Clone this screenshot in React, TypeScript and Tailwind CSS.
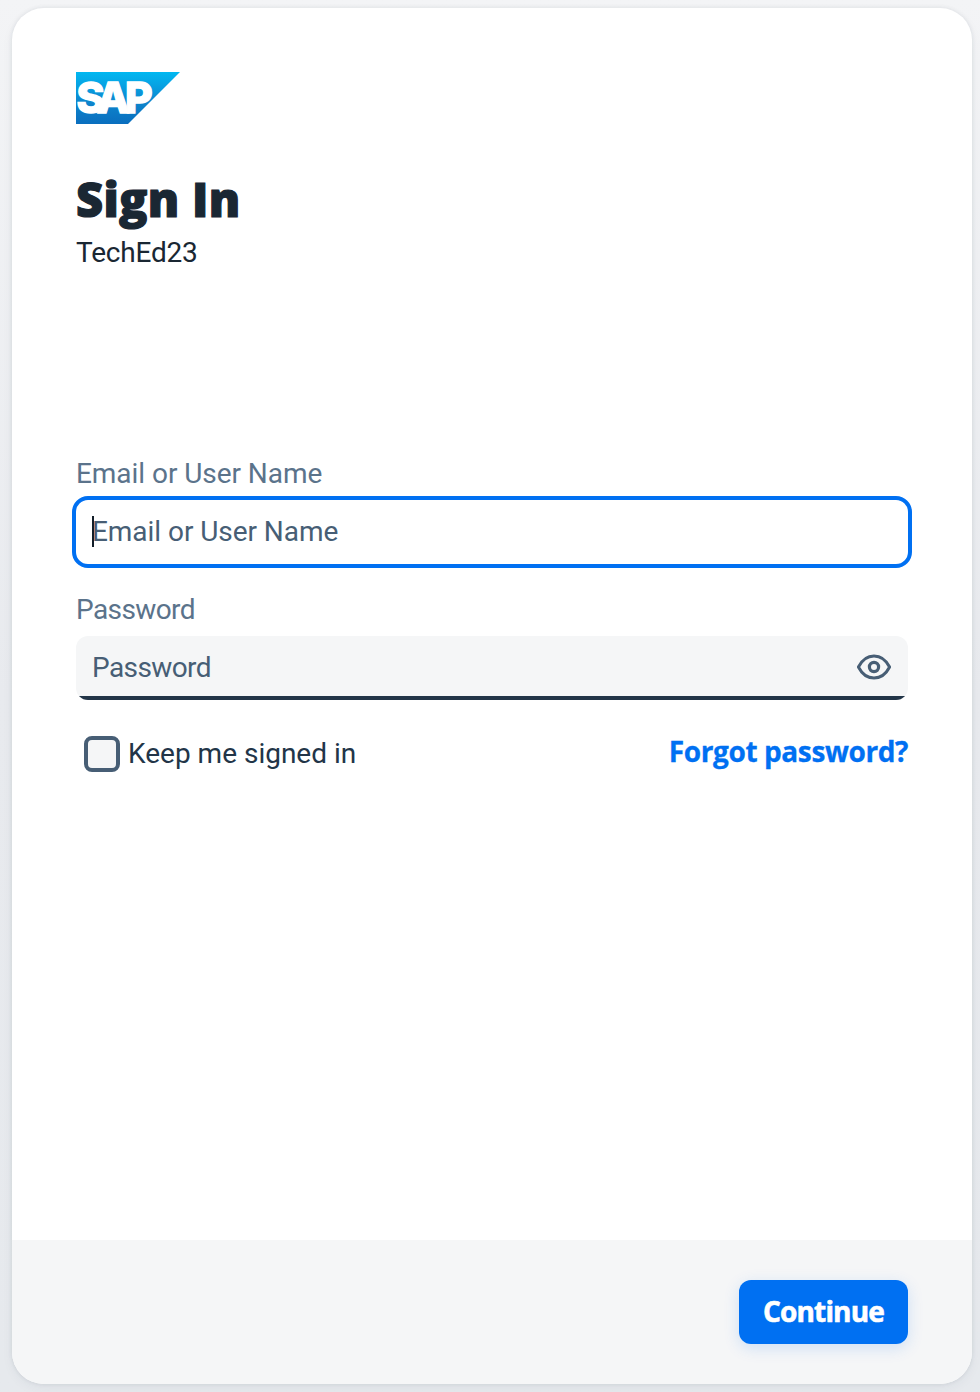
import { useState } from "react";

function SapLogo() {
  return (
    <svg
      width="104"
      height="52"
      viewBox="0 0 104 52"
      role="img"
      aria-label="SAP"
      className="block overflow-visible"
    >
      <defs>
        <linearGradient id="sap-blue" x1="0" y1="0" x2="0" y2="1">
          <stop offset="0" stopColor="#00b8f1" />
          <stop offset="0.22" stopColor="#06a5e5" />
          <stop offset="0.6" stopColor="#0d84cc" />
          <stop offset="1" stopColor="#0a6ebe" />
        </linearGradient>
      </defs>
      <path d="M0 0H104L52 52H0Z" fill="url(#sap-blue)" />
      <text
        x="0.4 20.8 49"
        y="41.3"
        fill="#fff"
        stroke="#fff"
        strokeWidth="1.4"
        fontFamily="Inter, sans-serif"
        fontWeight="800"
        fontSize="42.5"
      >
        SAP
      </text>
    </svg>
  );
}

function EyeIcon() {
  return (
    <svg width="36" height="28" viewBox="0 0 36 28" fill="none" stroke="#475e75" className="block">
      <path
        d="M2.4 14C5.8 7.4 11.4 3 18 3S30.2 7.4 33.6 14C30.2 20.6 24.6 25 18 25S5.8 20.6 2.4 14Z"
        strokeWidth="3"
        strokeLinejoin="round"
      />
      <circle cx="18" cy="14" r="4.6" strokeWidth="3.2" />
    </svg>
  );
}

export default function App() {
  const [keep, setKeep] = useState(false);
  return (
    <div className="h-[1392px] w-[980px] overflow-hidden bg-linear-to-b from-[#f3f4f6] via-[#e8eaee] to-[#e6e9ed] pt-2 pl-3 font-[Roboto,sans-serif] text-[28px] leading-8">
      <main className="flex h-[1376px] w-[960px] flex-col overflow-hidden rounded-[32px] bg-white shadow-[0_0_4px_rgba(34,53,72,0.1),0_4px_12px_rgba(34,53,72,0.05)]">
        <div className="flex grow flex-col px-16 pt-16">
          <SapLogo />
          <h1 className="mt-[47px] h-[58px] font-['Open_Sans',sans-serif] text-[47px] leading-[56px] font-extrabold tracking-[0.3px] whitespace-nowrap text-[#1a2733] [-webkit-text-stroke:1.2px_#1a2733]">
            Sign In
          </h1>
          <p className="mt-[8px] tracking-[-0.2px] text-[#1a2733]">TechEd23</p>

          <label htmlFor="user" className="mt-[189px] block w-fit tracking-[-0.05px] text-[#5b738b]">
            Email or User Name
          </label>
          <div className="relative -mx-1 mt-[6px] flex h-[72px] items-center rounded-[16px] border-4 border-[#0070f2] bg-white px-4">
            <input
              id="user"
              placeholder="Email or User Name"
              className="h-8 w-full bg-transparent p-0 tracking-[-0.05px] outline-none placeholder:text-[#475e75] placeholder:opacity-100"
            />
            <span className="absolute top-[16px] left-[16px] h-[31px] w-[2px] bg-[#131e29]" />
          </div>

          <label htmlFor="password" className="mt-[26px] block w-fit tracking-[-0.6px] text-[#5b738b]">
            Password
          </label>
          <div className="mt-[10px] flex h-16 overflow-hidden rounded-[12px] bg-[#f5f6f7]">
            <div className="flex grow items-center border-b-4 border-[#223548] px-4 pt-[2px]">
              <input
                id="password"
                type="password"
                placeholder="Password"
                className="h-8 grow bg-transparent p-0 pt-px tracking-[-0.6px] outline-none placeholder:text-[#475e75] placeholder:opacity-100"
              />
              <button type="button" aria-label="Show password">
                <EyeIcon />
              </button>
            </div>
          </div>

          <div className="mt-9 flex items-start justify-between">
            <label className="flex items-center gap-2 pl-2 text-[#223548]">
              <input
                type="checkbox"
                checked={keep}
                onChange={() => setKeep(!keep)}
                className="size-9 appearance-none rounded-[8px] border-4 border-[#475e75] bg-[#f5f6f7] checked:bg-[#475e75]"
              />
              <span>Keep me signed in</span>
            </label>
            <a
              href="#forgot"
              className="-mt-px font-['Open_Sans',sans-serif] text-[28px] font-bold tracking-[-0.4px] text-[#0070f2] [-webkit-text-stroke:0.3px_#0070f2]"
            >
              Forgot password?
            </a>
          </div>
        </div>

        <footer className="flex h-36 shrink-0 justify-end bg-[#f5f6f7] px-16 pt-10">
          <button
            type="button"
            className="h-16 w-[169px] rounded-[12px] bg-[#0070f2] pb-[3px] font-['Open_Sans',sans-serif] font-bold tracking-[-0.85px] text-white shadow-[0_4px_16px_rgba(0,112,242,0.16)] [-webkit-text-stroke:0.6px_white]"
          >
            Continue
          </button>
        </footer>
      </main>
    </div>
  );
}
